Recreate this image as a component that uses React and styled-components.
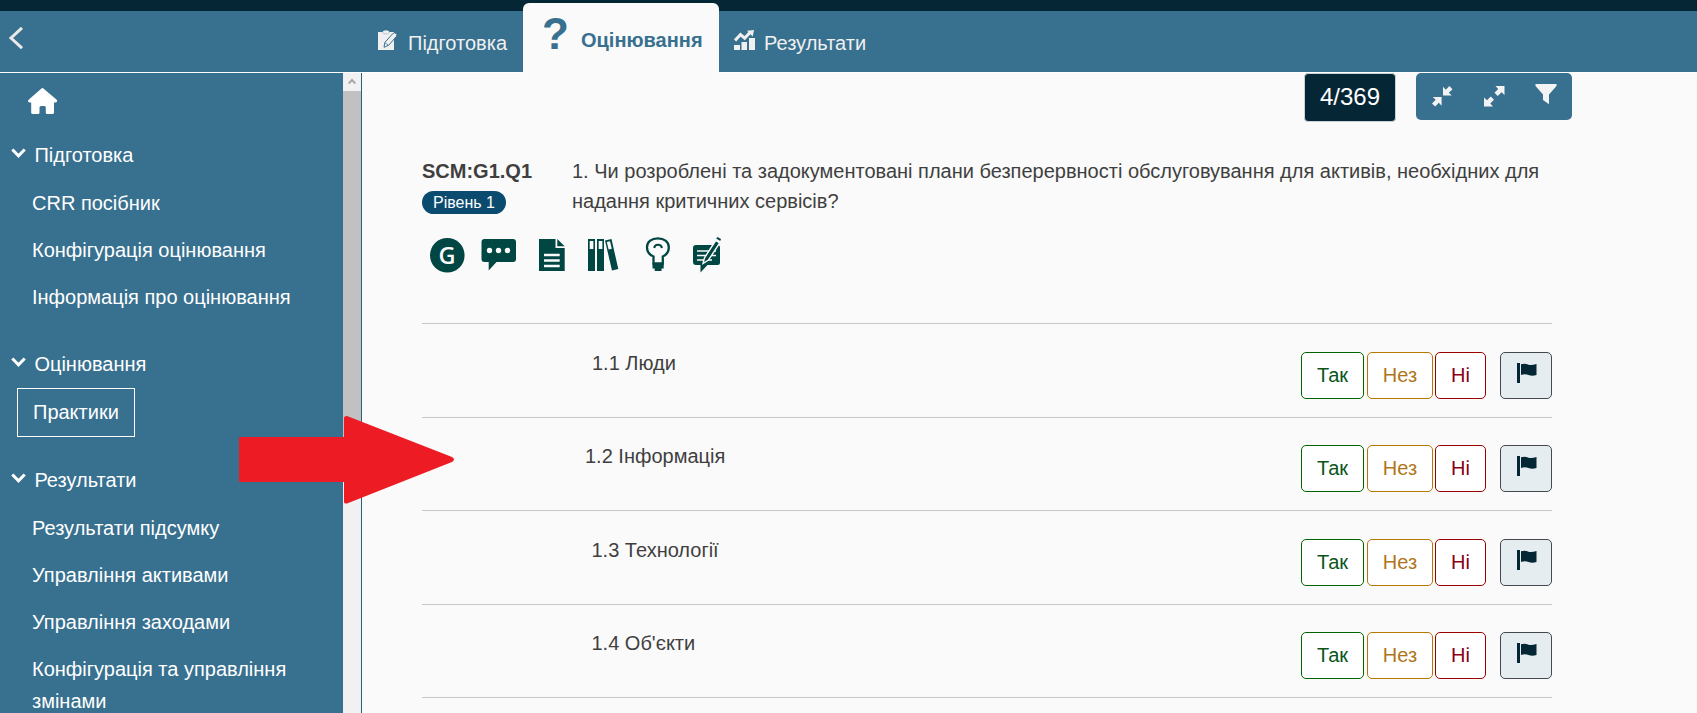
import React from "react";
import styled, { createGlobalStyle } from "styled-components";

const Global = createGlobalStyle`
  * { box-sizing: border-box; }
  html, body { margin: 0; height: 100%; overflow: hidden; background: #fafafa; }
  body { font: 20px "Liberation Sans", Arial, sans-serif; color: #3f3f3f; }
`;
const blue = "#38708f";
const navy = "#052635";

const Page = styled.div`
  position: relative;
  height: 713px;
  overflow: hidden;
  display: flex;
  flex-direction: column;
`;
const Header = styled.header`
  flex: none;
  height: 73px;
  display: flex;
  background: linear-gradient(${navy} 11px, ${blue} 11px, ${blue} 72px, #fff 72px);
`;
const Back = styled.button`
  display: flex;
  align-items: flex-start;
  flex: none;
  width: 370px;
  padding: 26px 0 0 8px;
  border: 0;
  background: none;
`;
const Tab = styled.div`
  display: flex;
  flex: none;
  height: 62px;
  margin-top: 11px;
  color: #f0f0f0;
  line-height: 64px;
  svg { margin: 19px 10px 0 0; flex: none; }
`;
const PrepTab = styled(Tab)`
  width: 153px;
  padding-left: 8px;
`;
const ResultTab = styled(Tab)`
  padding-left: 15px;
  svg { margin-right: 9px; }
`;
const ActiveTab = styled(Tab)`
  width: 196px;
  height: 70px;
  margin: 3px 0 0;
  padding-left: 19px;
  border-radius: 6px 6px 0 0;
  background: #fafafa;
  color: ${blue};
  font-weight: bold;
  line-height: 75px;
`;
const Mark = styled.span`
  width: 39px;
  font-size: 44px;
  line-height: 61px;
`;
const Body = styled.div`
  flex: 1;
  min-height: 0;
  display: flex;
`;
const Sidebar = styled.nav`
  width: 343px;
  flex: none;
  overflow: hidden;
  background: ${blue};
  color: #fff;
`;
const Home = styled.div`
  height: 58px;
  padding: 14px 0 0 27px;
  svg { display: block; }
`;
const Group = styled.section`
  margin-bottom: ${(p) => p.$gap}px;
`;
const GroupTitle = styled.div`
  display: flex;
  height: 48px;
  padding-left: 11px;
  line-height: 48px;
  svg { width: 15px; margin: 17px 8.4px 0 0; }
`;
const Item = styled.a`
  display: block;
  width: 300px;
  padding: 7.5px 0 7.5px 32px;
  line-height: 32px;
`;
const CurrentItem = styled.a`
  display: block;
  width: 118px;
  height: 49px;
  margin-left: 17px;
  padding-left: 15px;
  border: 1px solid #fff;
  line-height: 47px;
`;
const ScrollTrack = styled.div`
  width: 19px;
  flex: none;
  border-right: 1px solid #27617f;
  background: #f1f1f1;
`;
const ScrollUp = styled.div`
  height: 18px;
  padding: 5px 0 0 5px;
  svg { display: block; }
`;
const Thumb = styled.div`
  height: 354px;
  background: #c1c1c1;
`;
const Main = styled.main`
  flex: 1;
  padding-left: 60px;
`;
const Tools = styled.div`
  display: flex;
  align-items: flex-start;
  width: 1150px;
  justify-content: flex-end;
`;
const Counter = styled.div`
  width: 92px;
  height: 49px;
  margin-right: 20px;
  border: 1px solid #c9d2d6;
  border-radius: 4px;
  background: ${navy};
  color: #fff;
  font-size: 24px;
  line-height: 45px;
  text-align: center;
`;
const ToolGroup = styled.div`
  display: flex;
  width: 156px;
  height: 47px;
  border-radius: 5px;
  background: ${blue};
`;
const Tool = styled.button`
  width: 52px;
  padding: 0;
  border: 0;
  background: none;
  display: flex;
  justify-content: center;
  align-items: flex-start;
  padding-top: ${(p) => p.$top}px;
`;
const Question = styled.section`
  display: flex;
  height: 108px;
  padding-top: 34px;
  line-height: 30px;
`;
const Code = styled.div`
  width: 150px;
  font-weight: bold;
`;
const Level = styled.div`
  width: 84px;
  height: 23px;
  margin-top: 5px;
  border-radius: 12px;
  background: #0b4b6f;
  color: #fff;
  font-size: 16px;
  font-weight: normal;
  line-height: 23px;
  text-align: center;
`;
const Prompt = styled.div`
  width: 980px;
  white-space: pre-line;
`;
const Icons = styled.div`
  height: 93.3px;
  padding: 7px 0 0 6px;
  svg { display: block; }
`;
const Row = styled.div`
  display: flex;
  width: 1130px;
  height: 93.43px;
  padding-top: 27.6px;
  border-top: 1px solid #c8c8c8;
`;
const Label = styled.div`
  flex: 1;
  padding-left: ${(p) => p.$indent}px;
  line-height: 23px;
`;
const Answer = styled.button`
  width: ${(p) => p.$w}px;
  height: 47px;
  margin-right: ${(p) => p.$gap}px;
  padding: 0;
  border: 1px solid ${(p) => p.$edge};
  border-radius: 5px;
  background: #fff;
  color: ${(p) => p.$color};
  font: inherit;
`;
const FlagButton = styled.button`
  display: flex;
  align-items: flex-start;
  width: 52px;
  height: 47px;
  padding: 10px 0 0 16px;
  border: 1px solid #45494f;
  border-radius: 5px;
  background: #e6edf1;
  svg { flex: none; }
`;
const Pointer = styled.svg`
  position: absolute;
  left: 239px;
  top: 416px;
`;

const Chevron = () => (
  <svg width="15" height="11" viewBox="0 0 15 11"><path d="M1.3 1.5 7.5 7.8 13.7 1.5" fill="none" stroke="#fff" strokeWidth="3" /></svg>
);
const PrepIcon = () => (
  <svg width="20" height="20" viewBox="0 0 20 20">
    <path d="M0 2H4.5Q5 .3 8 .3T11.5 2H16V20H0Z" fill="#f0f0f0" />
    <path d="M4.5 2Q5 4 8 4T11.5 2" fill="none" stroke="#b7c7d0" />
    <path d="M6 17.3 6.8 12.5 14.5 3.9Q16.3 2 18 3.2 19.7 4.4 18.4 6.4L10.8 15.2Z" fill="#f0f0f0" stroke={blue} strokeWidth="1" />
    <path d="m7 12.7 3.4 2.6" stroke={blue} strokeWidth=".8" />
  </svg>
);
const ChartIcon = () => (
  <svg width="21" height="20" viewBox="0 0 21 20" fill="#f0f0f0">
    <path d="M0 15H6V20H0ZM7.5 12H13V20H7.5ZM15 8H21V20H15Z" />
    <path d="m1 10.5 5.5-6 4.2 3.6L16.5 2" fill="none" stroke="#f0f0f0" strokeWidth="3" />
    <path d="M13 .8 20 0 18.7 6.5Z" />
  </svg>
);
const Flag = () => (
  <svg width="20" height="20" viewBox="0 0 20 20" fill={navy}>
    <path d="M0 0H3V20H0ZM4 1.2Q8 .2 11 1.5T19.5 1V12Q15 13.6 11.5 12T4 12Z" />
  </svg>
);
const Arrows = ({ out }) => (
  <svg width="21" height="21" viewBox="0 0 21 21" fill="#f3f3f3">
    {out ? (
      <path d="M11.5 0H20.5V9L17.5 6.3 13.7 10 10.5 6.8 14.2 3ZM0 11.5 3 14.2 6.8 10.5 10 13.7 6.3 17.5 9 20.5H0Z" />
    ) : (
      <path d="M11 .8 13.8 3.7 17.4 0 20.5 3.2 16.8 6.8 19.8 9.6H11ZM.8 11H9.6V19.8L6.8 16.8 3.2 20.5 0 17.4 3.7 13.8Z" />
    )}
  </svg>
);
const QuestionIcons = () => (
  <svg width="294" height="38" viewBox="0 0 294 38" fill="#004643">
    <circle cx="19.3" cy="18.3" r="17.3" />
    <text x="19" y="26.8" fill="#fafafa" textAnchor="middle" fontFamily="Open Sans" fontWeight="600" fontSize="23.5">G</text>
    <path d="M56.5 2H85Q88 2 88 5V22Q88 25 85 25H68.5L60.7 33.5V25H56.5Q53.5 25 53.5 22V5Q53.5 2 56.5 2Z" />
    <g fill="#fafafa"><circle cx="61.5" cy="13.5" r="2.7" /><circle cx="70.5" cy="13.5" r="2.7" /><circle cx="79.5" cy="13.5" r="2.7" /></g>
    <path d="M111 2H127.5V11H136.7V34H111ZM129.3 2 136.7 9.3H129.3Z" />
    <path d="M116 18H131.7M116 23.5H131.7M116 29H131.7" stroke="#fafafa" strokeWidth="2.4" />
    <path d="M160 2H167V34H160ZM169 2H176V34H169ZM177 3.4 183.5 2 190.3 32 184 33.6Z" />
    <path d="M161.7 4H165.4V12H161.7ZM170.7 4H174.4V12H170.7ZM178.8 5 182 4.2 183.8 11.8 180.6 12.5Z" fill="#fafafa" />
    <path d="M225.5 26.5V19.5Q219 17 219 10.3C219 4.5 223.8 1.3 229.8 1.3S240.8 4.5 240.8 10.3Q240.8 17 234.8 19.5V26.5Z" fill="none" stroke="#004643" strokeWidth="2.3" />
    <path d="M226.2 11Q226.7 7.8 230 7.8T234 11" fill="none" stroke="#004643" strokeWidth="2" />
    <path d="M224.5 26H235.7V31.5H233.5V34H226.7V31.5H224.5Z" />
    <path d="M268 8H289.5Q292 8 292 10.5V25.5Q292 28 289.5 28H279.5L272.5 35.5V28H268Q265 28 265 25V11Q265 8 268 8Z" />
    <path d="M269 14H288M269 18.5H288M269 23H284" stroke="#fafafa" strokeWidth="1.6" />
    <path d="M275 26.5 276.5 20.8 287.7 3.5 291.7 6 280.5 23Z" stroke="#fafafa" strokeWidth="1.4" />
    <path d="M288.2 1.5 289.5 0 293 2 292.2 4.1Z" />
  </svg>
);

const rows = [
  ["1.1 Люди", 170],
  ["1.2 Інформація", 163],
  ["1.3 Технології", 169.5],
  ["1.4 Об'єкти", 169.5],
];

export default function App() {
  return (
    <Page>
      <Global />
      <Header>
        <Back aria-label="Назад">
          <svg width="16" height="24" viewBox="0 0 16 24"><path d="M14 1.8 3 12 14 22.2" fill="none" stroke="#e9e9e9" strokeWidth="3" /></svg>
        </Back>
        <PrepTab><PrepIcon />Підготовка</PrepTab>
        <ActiveTab><Mark>?</Mark>Оцінювання</ActiveTab>
        <ResultTab><ChartIcon />Результати</ResultTab>
      </Header>
      <Body>
        <Sidebar>
          <Home>
            <svg width="32" height="28" viewBox="0 0 32 28" fill="#fff"><path d="M15.8 1 30 13Q30.5 15.5 28 15.5H27V25.5Q27 27 25.5 27H20Q18.8 27 18.8 25.7V20.5Q18.8 19 17.3 19H14Q12.5 19 12.5 20.5V25.7Q12.5 27 11 27H5.7Q4.2 27 4.2 25.5V15.5H3Q.5 15.5 1.3 13L14.2 1.7Q15 1 15.8 1Z" /></svg>
          </Home>
          <Group $gap={20}>
            <GroupTitle><Chevron />Підготовка</GroupTitle>
            <Item>CRR посібник</Item>
            <Item>Конфігурація оцінювання</Item>
            <Item>Інформація про оцінювання</Item>
          </Group>
          <Group $gap={19}>
            <GroupTitle><Chevron />Оцінювання</GroupTitle>
            <CurrentItem>Практики</CurrentItem>
          </Group>
          <Group $gap={0}>
            <GroupTitle><Chevron />Результати</GroupTitle>
            <Item>Результати підсумку</Item>
            <Item>Управління активами</Item>
            <Item>Управління заходами</Item>
            <Item>Конфігурація та управління змінами</Item>
          </Group>
        </Sidebar>
        <ScrollTrack>
          <ScrollUp><svg width="8" height="7" viewBox="0 0 8 7"><path d="M.7 5.5 4 2 7.3 5.5" fill="none" stroke="#a9a9a9" strokeWidth="2" /></svg></ScrollUp>
          <Thumb />
        </ScrollTrack>
        <Main>
          <Tools>
            <Counter>4/369</Counter>
            <ToolGroup>
              <Tool $top={13}><Arrows /></Tool>
              <Tool $top={13}><Arrows out /></Tool>
              <Tool $top={11}><svg width="22" height="21" viewBox="0 0 22 21" fill="#f3f3f3"><path d="M.5 0H21.5V2L14 10.5V20.3L8 16V10.5L.5 2Z" /></svg></Tool>
            </ToolGroup>
          </Tools>
          <Question>
            <Code>SCM:G1.Q1<Level>Рівень 1</Level></Code>
            <Prompt>{"1. Чи розроблені та задокументовані плани безперервності обслуговування для активів, необхідних для\nнадання критичних сервісів?"}</Prompt>
          </Question>
          <Icons><QuestionIcons /></Icons>
          {rows.map(([label, indent]) => (
            <Row key={label}>
              <Label $indent={indent}>{label}</Label>
              <Answer $w={63} $gap={3} $edge="#006400" $color="#0b551b">Так</Answer>
              <Answer $w={66} $gap={2} $edge="#b87700" $color="#b0751a">Нез</Answer>
              <Answer $w={51} $gap={14} $edge="#990000" $color="#8b0015">Ні</Answer>
              <FlagButton aria-label="Позначити"><Flag /></FlagButton>
            </Row>
          ))}
          <Row />
        </Main>
      </Body>
      <Pointer width="216" height="88" viewBox="0 0 216 88"><path d="M1 21H105V2Q105 0 108 0L213 41Q217 43.5 213 46L108 87.5Q105 88 105 86V66H1Q0 66 0 65V22Q0 21 1 21Z" fill="#ed1c24" /></Pointer>
    </Page>
  );
}
